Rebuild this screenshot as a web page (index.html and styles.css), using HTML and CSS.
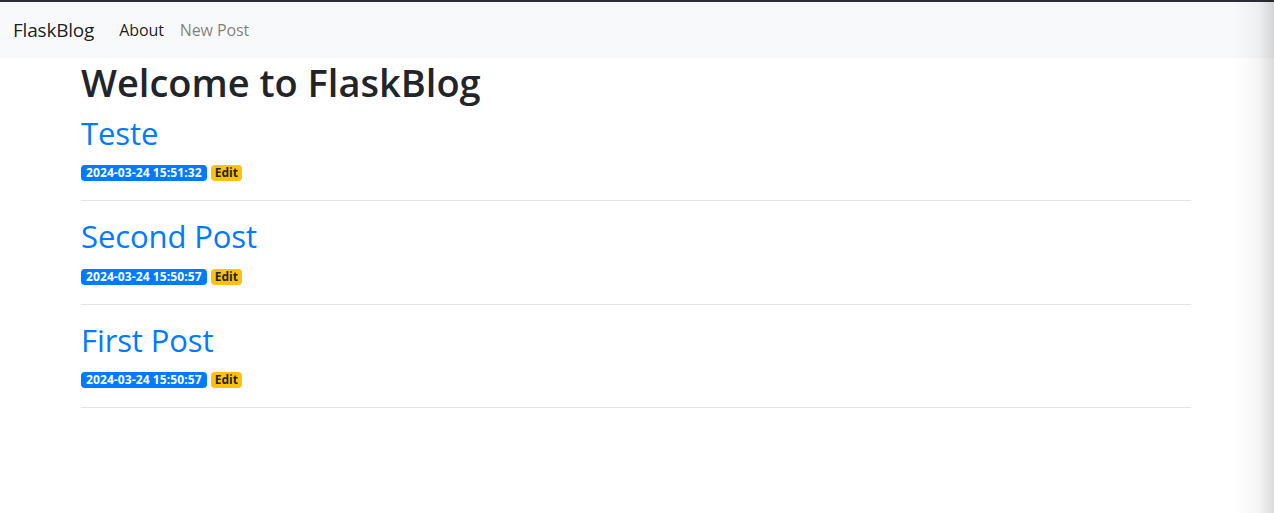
FILE: index.html
```html
<!DOCTYPE html>
<html lang="en">
<head>
<meta charset="utf-8">
<title>FlaskBlog</title>
<link rel="stylesheet" href="styles.css">
</head>
<body>
<div class="topline"></div>
<nav class="navbar">
  <a class="brand" href="#">FlaskBlog</a>
  <ul class="nav">
    <li><a class="nav-link active" href="#">About</a></li>
    <li><a class="nav-link" href="#">New Post</a></li>
  </ul>
</nav>
<main class="container">
  <h1 class="page-title">Welcome to FlaskBlog</h1>

  <a class="post-link" href="#"><h2 class="post-title">Teste</h2></a>
  <div class="meta">
    <span class="badge badge-primary">2024-03-24 15:51:32</span>
    <a class="badge badge-warning" href="#">Edit</a>
  </div>
  <hr class="divider">

  <a class="post-link" href="#"><h2 class="post-title">Second Post</h2></a>
  <div class="meta">
    <span class="badge badge-primary">2024-03-24 15:50:57</span>
    <a class="badge badge-warning" href="#">Edit</a>
  </div>
  <hr class="divider">

  <a class="post-link" href="#"><h2 class="post-title">First Post</h2></a>
  <div class="meta">
    <span class="badge badge-primary">2024-03-24 15:50:57</span>
    <a class="badge badge-warning" href="#">Edit</a>
  </div>
  <hr class="divider">
</main>
<div class="edge-shadow"></div>
</body>
</html>
```
FILE: styles.css
```css
* { box-sizing: border-box; }
html, body {
  margin: 0;
  padding: 0;
  background: #fff;
  color: #212529;
  font-family: "Open Sans", "Noto Sans", Arial, sans-serif;
  font-size: 16px;
  line-height: 1.5;
}
a { text-decoration: none; }

.topline {
  height: 2px;
  background: #2b2f33;
}

.navbar {
  display: flex;
  align-items: center;
  height: 56px;
  padding: 8px 16px 8px 13px;
  background: #f8f9fa;
}
.brand {
  font-size: 19px;
  color: rgba(0, 0, 0, 0.9);
  margin-right: 17px;
  line-height: 1.5;
  letter-spacing: -0.2px;
}
.nav {
  display: flex;
  list-style: none;
  margin: 0;
  padding: 0;
}
.nav-link {
  display: block;
  padding: 8px;
  font-size: 16px;
  color: rgba(0, 0, 0, 0.5);
  letter-spacing: -0.1px;
}
.nav-link.active { color: rgba(0, 0, 0, 0.9); }

.container {
  width: 1110px;
  margin-left: 81px;
}

.page-title {
  margin: 0 0 8px;
  font-size: 38px;
  font-weight: 600;
  line-height: 48px;
  color: #212529;
}

.post-link { color: #007bff; display: block; }
.post-title {
  margin: 0 0 8px;
  font-size: 31px;
  font-weight: 500;
  line-height: 38.4px;
  letter-spacing: -0.1px;
}

.meta {
  display: flex;
  align-items: flex-start;
  gap: 4px;
  height: 24px;
  padding-top: 5px;
}
.badge {
  display: inline-block;
  padding: 0 5px;
  font-size: 12px;
  font-weight: 700;
  line-height: 16px;
  height: 16px;
  border-radius: 4px;
  white-space: nowrap;
}
.badge-primary { background: #007bff; color: #fff; letter-spacing: 0.1px; }
.badge-warning { background: #ffc107; color: #212529; padding: 0 4px; }

.divider {
  margin: 16px 0;
  border: 0;
  border-top: 1px solid rgba(0, 0, 0, 0.1);
}

.edge-shadow {
  position: fixed;
  top: 0;
  right: 0;
  bottom: 0;
  width: 40px;
  background: linear-gradient(to right, rgba(0,0,0,0), rgba(0,0,0,0.04) 60%, rgba(0,0,0,0.14));
  pointer-events: none;
}
```
